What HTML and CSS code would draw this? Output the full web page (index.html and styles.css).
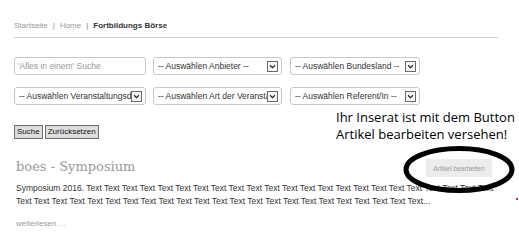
FILE: index.html
```html
<!DOCTYPE html>
<html lang="de">
<head>
<meta charset="utf-8">
<title>Fortbildungs Börse</title>
<link rel="stylesheet" href="styles.css">
</head>
<body>
<div class="page">
  <nav class="crumbs">
    <a class="crumb">Startseite</a><span class="sep">|</span><a class="crumb">Home</a><span class="sep">|</span><strong class="current">Fortbildungs Börse</strong>
  </nav>

  <form class="filters">
    <div class="grid">
      <div class="field input">'Alles in einem' Suche</div>
      <div class="field select"><span class="label">-- Auswählen Anbieter --</span><span class="arrow"><svg viewBox="0 0 11 11" width="11" height="11"><path d="M2.5 4 L5.5 7 L8.5 4" fill="none" stroke="#222" stroke-width="1.4"/></svg></span></div>
      <div class="field select"><span class="label">-- Auswählen Bundesland --</span><span class="arrow"><svg viewBox="0 0 11 11" width="11" height="11"><path d="M2.5 4 L5.5 7 L8.5 4" fill="none" stroke="#222" stroke-width="1.4"/></svg></span></div>
      <div class="field select"><span class="label">-- Auswählen Veranstaltungsdatum --</span><span class="arrow"><svg viewBox="0 0 11 11" width="11" height="11"><path d="M2.5 4 L5.5 7 L8.5 4" fill="none" stroke="#222" stroke-width="1.4"/></svg></span></div>
      <div class="field select"><span class="label">-- Auswählen Art der Veranstaltung --</span><span class="arrow"><svg viewBox="0 0 11 11" width="11" height="11"><path d="M2.5 4 L5.5 7 L8.5 4" fill="none" stroke="#222" stroke-width="1.4"/></svg></span></div>
      <div class="field select"><span class="label">-- Auswählen Referent/In --</span><span class="arrow"><svg viewBox="0 0 11 11" width="11" height="11"><path d="M2.5 4 L5.5 7 L8.5 4" fill="none" stroke="#222" stroke-width="1.4"/></svg></span></div>
    </div>
    <div class="buttons">
      <button type="button" class="btn">Suche</button>
      <button type="button" class="btn">Zurücksetzen</button>
    </div>
  </form>

  <article class="entry">
    <div class="entry-head">
      <h2 class="entry-title">boes - Symposium</h2>
      <button type="button" class="edit">Artikel bearbeiten</button>
    </div>
    <p class="excerpt"><span class="line">Symposium 2016. Text Text Text Text Text Text Text Text Text Text Text Text Text Text Text Text Text Text Text Text Text Text Text Text Text Text</span><span class="line">Text Text Text Text Text Text Text Text Text Text Text Text Text Text Text Text Text Text Text Text Text Text Text...</span></p>
    <a class="more">weiterlesen ...</a>
  </article>

  <div class="note">Ihr Inserat ist mit dem Button<br>Artikel bearbeiten versehen!</div>
  <svg class="ring" width="120" height="54" viewBox="0 0 120 54"><ellipse cx="58" cy="25.5" rx="53" ry="21" fill="none" stroke="#000" stroke-width="5"/></svg>
  <span class="dot"></span>
</div>
</body>
</html>
```

FILE: styles.css
```css
* { box-sizing: border-box; }
html, body { margin: 0; padding: 0; background: #fff; }
body { font-family: "Liberation Sans", Arial, sans-serif; color: #333; }

.page {
  position: relative;
  width: 519px;
  height: 240px;
  overflow: hidden;
  padding: 21px 21px 0 14px;
}

.crumbs {
  font-size: 8px;
  line-height: 10px;
  padding-bottom: 6px;
  border-bottom: 1px solid #cfcfcf;
  display: flex;
  align-items: center;
}
.crumb { color: #999; text-decoration: none; }
.sep { color: #888; margin: 0 5px; }
.current { color: #333; font-weight: bold; }

.filters { margin-top: 19px; }
.grid {
  display: grid;
  grid-template-columns: 132px 129px 131px;
  column-gap: 7px;
  row-gap: 12px;
}
.grid .field:nth-child(3n) { margin-left: 1px; }
.field {
  height: 18px;
  border: 1px solid #c8c8c8;
  border-radius: 3px;
  font-size: 8.5px;
  line-height: 16px;
  display: flex;
  align-items: center;
  overflow: hidden;
  background: #fff;
}
.input { color: #999; padding-left: 3px; }
.select { color: #333; padding-left: 4px; padding-right: 3px; }
.select .label { flex: 1; white-space: nowrap; overflow: hidden; }
.arrow {
  flex: none;
  width: 11px;
  height: 11px;
  border: 1px solid #6a6a6a;
  background: #f6f6f6;
  display: flex;
  align-items: center;
  justify-content: center;
}
.arrow svg { width: 9px; height: 9px; }

.buttons { display: flex; gap: 2px; margin-top: 20px; }
.btn {
  font-family: "Liberation Sans", Arial, sans-serif;
  font-size: 8px;
  line-height: 10px;
  height: 14px;
  padding: 0 2px;
  margin: 0;
  color: #111;
  background: #dedede;
  border: 1px solid #6e6e6e;
  border-radius: 0;
}

.entry { padding-left: 2px; margin-top: 20px; }
.entry-head {
  display: flex;
  justify-content: space-between;
  align-items: flex-start;
  padding-right: 6px;
}
.entry-title {
  margin: 0;
  font-family: "DejaVu Serif", Georgia, serif;
  font-weight: normal;
  font-size: 13px;
  line-height: 16px;
  color: #999;
}
.edit {
  margin-top: 0;
  width: 66px;
  height: 18px;
  padding: 0;
  border: 0;
  background: #ececec;
  color: #999;
  font-family: "Liberation Sans", Arial, sans-serif;
  font-size: 6.6px;
}

.excerpt {
  margin: 5px 0 0;
  width: 479px;
  overflow: hidden;
  font-size: 8.5px;
  line-height: 12.5px;
  color: #333;
}
.line { display: block; white-space: nowrap; }

.more {
  display: block;
  margin-top: 12px;
  font-size: 8px;
  line-height: 10px;
  color: #999;
}

.note {
  position: absolute;
  left: 336px;
  top: 109px;
  font-family: "Open Sans", sans-serif;
  font-size: 13px;
  line-height: 17px;
  color: #000;
  white-space: nowrap;
}
.ring {
  position: absolute;
  left: 401px;
  top: 144px;
}
.dot {
  position: absolute;
  left: 516px;
  top: 198px;
  width: 2px;
  height: 2px;
  background: #e22;
}
```
